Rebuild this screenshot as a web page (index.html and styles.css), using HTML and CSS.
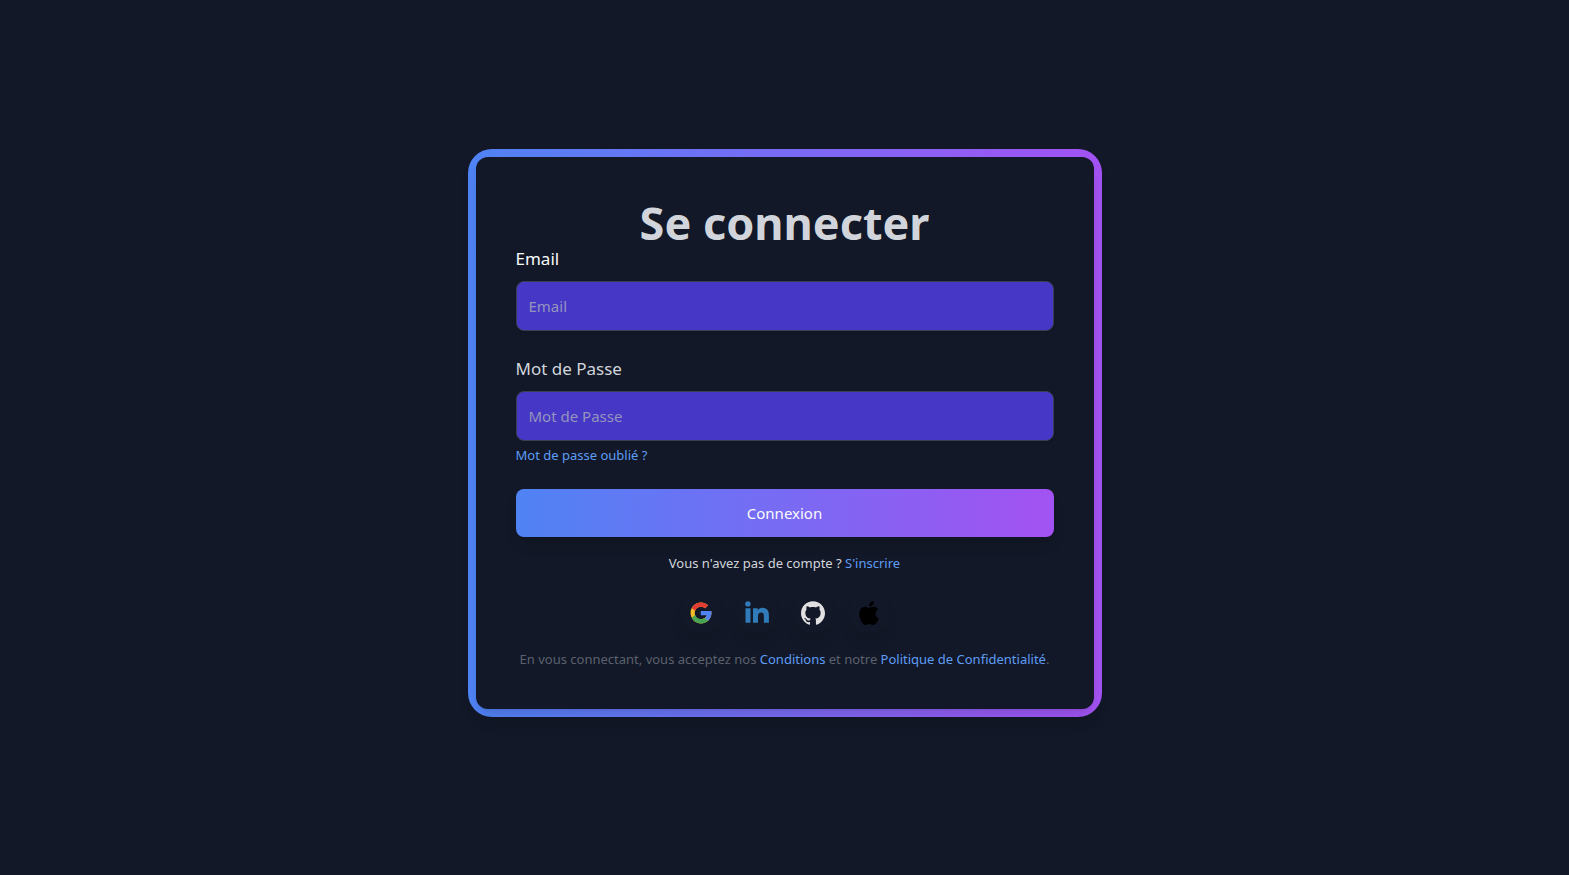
FILE: index.html
```html
<!DOCTYPE html>
<html lang="fr">
<head>
  <meta charset="utf-8">
  <meta name="viewport" content="width=device-width, initial-scale=1">
  <title>Se connecter</title>
  <link rel="stylesheet" href="styles.css">
</head>
<body>
  <main class="page">
    <div class="frame">
      <section class="card">
        <h1 class="title">Se connecter</h1>
        <form class="form">
          <div class="field">
            <label class="label label-bright" for="email">Email</label>
            <input class="input" id="email" type="email" placeholder="Email">
          </div>
          <div class="field">
            <label class="label" for="password">Mot de Passe</label>
            <input class="input" id="password" type="password" placeholder="Mot de Passe">
            <a class="link forgot" href="#">Mot de passe oublié ?</a>
          </div>
          <button class="submit" type="submit">Connexion</button>
        </form>
        <p class="signup">Vous n'avez pas de compte ? <a class="link" href="#">S'inscrire</a></p>
        <div class="socials">
          <button class="social" type="button" aria-label="Google">
            <svg viewBox="1 1 46 46" width="24" height="24">
              <path fill="#F5BC2A" d="M43.611 20.083H42V20H24v8h11.303c-1.649 4.657-6.08 8-11.303 8-6.627 0-12-5.373-12-12s5.373-12 12-12c3.059 0 5.842 1.154 7.961 3.039l5.657-5.657C34.046 6.053 29.268 4 24 4 12.955 4 4 12.955 4 24s8.955 20 20 20 20-8.955 20-20c0-1.341-.138-2.65-.389-3.917z"/>
              <path fill="#E23B33" d="M6.306 14.691l6.571 4.819C14.655 15.108 18.961 12 24 12c3.059 0 5.842 1.154 7.961 3.039l5.657-5.657C34.046 6.053 29.268 4 24 4 16.318 4 9.656 8.337 6.306 14.691z"/>
              <path fill="#46A553" d="M24 44c5.166 0 9.86-1.977 13.409-5.192l-6.19-5.238A11.91 11.91 0 0 1 24 36c-5.202 0-9.619-3.317-11.283-7.946l-6.522 5.025C9.505 39.556 16.227 44 24 44z"/>
              <path fill="#4F83F1" d="M43.611 20.083H23.500v8.200h11.803a12.04 12.04 0 0 1-4.087 5.288l6.193 5.237C41.500 35.200 44 30 44 24c0-1.341-.138-2.65-.389-3.917z"/>
            </svg>
          </button>
          <button class="social" type="button" aria-label="LinkedIn">
            <svg viewBox="0 0 24 24" width="24" height="24" fill="#307BB9">
              <circle cx="2.9" cy="2.9" r="2.7"/>
              <path d="M.5 7.2h5v14.5h-5zM8 7.2h4.7v2c.9-1.5 2.5-2.4 4.5-2.4 4.8 0 6.7 2.8 6.7 7.4v7.5h-5v-6.7c0-2.3-.7-3.6-2.7-3.6-2.2 0-3.2 1.4-3.2 3.7v6.6H8z"/>
            </svg>
          </button>
          <button class="social" type="button" aria-label="GitHub">
            <svg viewBox="0 0 24 24" width="24" height="24" fill="#E1DFDF">
              <path d="M12 .297c-6.63 0-12 5.373-12 12 0 5.303 3.438 9.8 8.205 11.385.6.113.82-.258.82-.577 0-.285-.01-1.04-.015-2.04-3.338.724-4.042-1.61-4.042-1.61C4.422 18.07 3.633 17.7 3.633 17.7c-1.087-.744.084-.729.084-.729 1.205.084 1.838 1.236 1.838 1.236 1.07 1.835 2.809 1.305 3.495.998.108-.776.417-1.305.76-1.605-2.665-.3-5.466-1.332-5.466-5.93 0-1.31.465-2.38 1.235-3.22-.135-.303-.54-1.523.105-3.176 0 0 1.005-.322 3.3 1.23.96-.267 1.98-.399 3-.405 1.02.006 2.04.138 3 .405 2.28-1.552 3.285-1.23 3.285-1.23.645 1.653.24 2.873.12 3.176.765.84 1.23 1.91 1.23 3.22 0 4.61-2.805 5.625-5.475 5.92.42.36.81 1.096.81 2.22 0 1.606-.015 2.896-.015 3.286 0 .315.21.69.825.57C20.565 22.092 24 17.592 24 12.297c0-6.627-5.373-12-12-12"/>
            </svg>
          </button>
          <button class="social" type="button" aria-label="Apple">
            <svg viewBox="0 0 24 24" width="24" height="24" fill="#000">
              <path d="M12.152 6.896c-.948 0-2.415-1.078-3.96-1.04-2.04.027-3.91 1.183-4.961 3.014-2.117 3.675-.546 9.103 1.519 12.09 1.013 1.454 2.208 3.09 3.792 3.039 1.52-.065 2.09-.987 3.935-.987 1.831 0 2.35.987 3.96.948 1.637-.026 2.676-1.48 3.676-2.948 1.156-1.688 1.636-3.325 1.662-3.415-.039-.013-3.182-1.221-3.22-4.857-.026-3.04 2.48-4.494 2.597-4.559-1.429-2.09-3.623-2.324-4.39-2.376-2-.156-3.675 1.09-4.61 1.09zM15.53 3.83c.843-1.012 1.4-2.427 1.245-3.83-1.207.052-2.662.805-3.532 1.818-.78.896-1.454 2.338-1.273 3.714 1.338.104 2.715-.688 3.559-1.701"/>
            </svg>
          </button>
        </div>
        <p class="legal">En vous connectant, vous acceptez nos <a class="link" href="#">Conditions</a> et notre <a class="link" href="#">Politique de Confidentialité</a>.</p>
      </section>
    </div>
  </main>
</body>
</html>
```
FILE: styles.css
```css
* {
  box-sizing: border-box;
}

body {
  margin: 0;
  background: #121827;
  color: #d1d5db;
  font-family: "Segoe UI", "Noto Sans", "Open Sans", sans-serif;
  font-size: 15px;
  line-height: 24px;
}

.page {
  display: flex;
  align-items: center;
  justify-content: center;
  min-height: 100vh;
  padding: 16px 16px 26px;
}

.frame {
  width: 100%;
  max-width: 634px;
  padding: 8px;
  border-radius: 24px;
  background: linear-gradient(to right, #4f83f4, #a352f2);
  box-shadow: 0 10px 15px -3px rgb(0 0 0 / 0.06);
}

.card {
  padding: 44px 40px 40px;
  border-radius: 12px;
  background: #121827;
  box-shadow: 0 10px 15px -3px rgb(0 0 0 / 0.1), 0 4px 6px -4px rgb(0 0 0 / 0.1);
}

.title {
  margin: 0;
  color: #d1d5db;
  font-size: 45px;
  line-height: 44px;
  font-weight: 700;
  text-align: center;
}

.form {
  display: flex;
  flex-direction: column;
  gap: 24px;
}

.field {
  display: flex;
  flex-direction: column;
  align-items: flex-start;
}

.label {
  margin-bottom: 8px;
  font-size: 17px;
  line-height: 28px;
}

.label-bright {
  color: #f9fafb;
}

.input {
  width: 100%;
  padding: 12px;
  border: 1px solid #374151;
  border-radius: 8px;
  background: #4637c6;
  color: #fff;
  font: inherit;
  box-shadow: 0 1px 2px rgb(0 0 0 / 0.1);
}

.input::placeholder {
  color: #9594bd;
  opacity: 1;
}

.link {
  color: #5f9df5;
  text-decoration: none;
}

.forgot {
  margin-top: 4px;
  font-size: 13px;
  line-height: 20px;
}

.submit {
  padding: 12px;
  border: 0;
  border-radius: 8px;
  background: linear-gradient(to right, #4f83f4, #a352f2);
  color: #f9fafb;
  font: inherit;
  box-shadow: 0 10px 15px -3px rgb(0 0 0 / 0.1), 0 4px 6px -4px rgb(0 0 0 / 0.1);
}

.signup {
  margin: 16px 0 20px;
  font-size: 13px;
  line-height: 20px;
  text-align: center;
}

.socials {
  display: flex;
  justify-content: center;
  gap: 16px;
  margin-bottom: 16px;
}

.social {
  display: flex;
  padding: 8px;
  border: 0;
  border-radius: 20px;
  background: transparent;
  box-shadow: 0 10px 15px -3px rgb(0 0 0 / 0.1);
}

.legal {
  margin: 0;
  color: #5b616e;
  font-size: 13px;
  line-height: 20px;
  text-align: center;
}
```
